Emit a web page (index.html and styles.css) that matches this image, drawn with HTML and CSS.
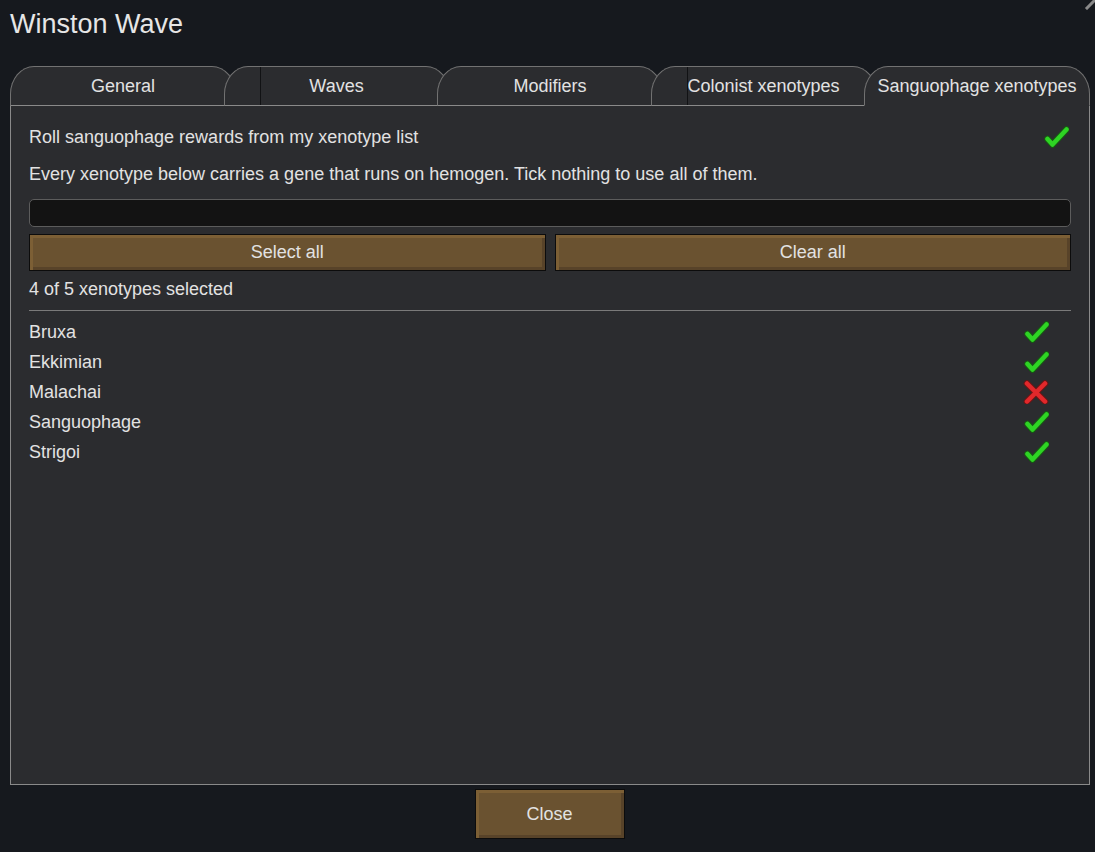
FILE: index.html
```html
<!DOCTYPE html>
<html>
<head>
<meta charset="utf-8">
<link rel="stylesheet" href="styles.css">
</head>
<body>
<div class="window">
  <h1 class="title">Winston Wave</h1>
  <div class="tabs">
    <div class="tab">General</div>
    <div class="tab"><span class="notch"></span>Waves</div>
    <div class="tab">Modifiers</div>
    <div class="tab"><span class="notch"></span>Colonist xenotypes</div>
    <div class="tab active">Sanguophage xenotypes</div>
  </div>
  <div class="panel">
    <div class="row toggle-row">
      <span>Roll sanguophage rewards from my xenotype list</span>
      <svg class="icon" viewBox="0 0 26 24" width="26" height="24"><path class="chk-o" d="M4.5 14 L9.5 19.5 L23.5 4.5"/><path class="chk" d="M4.5 14 L9.5 19.5 L23.5 4.5"/></svg>
    </div>
    <div class="row note">Every xenotype below carries a gene that runs on hemogen. Tick nothing to use all of them.</div>
    <div class="search"></div>
    <div class="btn-row">
      <div class="btn">Select all</div>
      <div class="btn">Clear all</div>
    </div>
    <div class="count">4 of 5 xenotypes selected</div>
    <div class="divider"></div>
    <ul class="list">
      <li class="item"><span>Bruxa</span><svg class="icon" viewBox="0 0 26 24" width="26" height="24"><path class="chk-o" d="M4.5 14 L9.5 19.5 L23.5 4.5"/><path class="chk" d="M4.5 14 L9.5 19.5 L23.5 4.5"/></svg></li>
      <li class="item"><span>Ekkimian</span><svg class="icon" viewBox="0 0 26 24" width="26" height="24"><path class="chk-o" d="M4.5 14 L9.5 19.5 L23.5 4.5"/><path class="chk" d="M4.5 14 L9.5 19.5 L23.5 4.5"/></svg></li>
      <li class="item"><span>Malachai</span><svg class="icon" viewBox="0 0 26 24" width="26" height="24"><path class="x-o" d="M4 3.5 L22 21.5 M22 3.5 L4 21.5"/><path class="x" d="M4 3.5 L22 21.5 M22 3.5 L4 21.5"/></svg></li>
      <li class="item"><span>Sanguophage</span><svg class="icon" viewBox="0 0 26 24" width="26" height="24"><path class="chk-o" d="M4.5 14 L9.5 19.5 L23.5 4.5"/><path class="chk" d="M4.5 14 L9.5 19.5 L23.5 4.5"/></svg></li>
      <li class="item"><span>Strigoi</span><svg class="icon" viewBox="0 0 26 24" width="26" height="24"><path class="chk-o" d="M4.5 14 L9.5 19.5 L23.5 4.5"/><path class="chk" d="M4.5 14 L9.5 19.5 L23.5 4.5"/></svg></li>
    </ul>
  </div>
  <div class="footer">
    <div class="btn close">Close</div>
  </div>
</div>
<svg class="resize" width="12" height="12" viewBox="0 0 12 12"><path d="M3 10 L11 2" stroke="#8a8a8a" stroke-width="3" stroke-linecap="square"/></svg>
</body>
</html>
```

FILE: styles.css
```css
html, body {
  margin: 0;
  padding: 0;
  background: #16191e;
  color: #e2e2e2;
  font-family: "Liberation Sans", Arial, sans-serif;
  font-size: 18px;
}
.window {
  padding: 0 5px 0 10px;
  width: 1080px;
}
.title {
  margin: 0;
  padding-top: 9px;
  height: 30px;
  line-height: 30px;
  font-size: 27px;
  font-weight: normal;
  color: #e6e6e6;
}
.tabs {
  display: flex;
  margin-top: 27px;
  height: 40px;
  margin-bottom: -1px;
}
.tab {
  position: relative;
  box-sizing: border-box;
  flex: 0 0 226px;
  height: 40px;
  margin-left: -12.5px;
  background: #2b2c2f;
  border: 1px solid #727272;
  border-bottom-color: #8a8a8a;
  border-radius: 24px 24px 0 0 / 28px 28px 0 0;
  text-align: center;
  line-height: 38px;
  white-space: nowrap;
  color: #e2e2e2;
}
.tab:first-child { margin-left: 0; }
.tab.active {
  border-bottom-color: #2b2c2f;
}
.notch {
  position: absolute;
  left: 35px;
  top: 0;
  bottom: 0;
  width: 1px;
  background: #111214;
}
.panel {
  box-sizing: border-box;
  height: 680px;
  background: #2b2c2f;
  border: 1px solid #8a8a8a;
  padding: 15px 18px 0 18px;
  display: flex;
  flex-direction: column;
}
.row {
  height: 32px;
  line-height: 32px;
}
.toggle-row {
  display: flex;
  justify-content: space-between;
  align-items: center;
  padding-right: 2px;
}
.note {
  margin-top: 5px;
}
.search {
  box-sizing: border-box;
  margin-top: 9px;
  height: 28px;
  background: #131313;
  border: 1px solid #5c5c5c;
  border-radius: 5px;
}
.btn-row {
  margin-top: 7px;
  display: grid;
  grid-template-columns: 1fr 1fr;
  gap: 9px;
}
.btn {
  box-sizing: border-box;
  height: 37px;
  line-height: 35px;
  text-align: center;
  background: #6a5230;
  border: 1px solid #0c0c0c;
  box-shadow: inset 3px 3px 0 #7c5f35, inset -3px -3px 0 #584329;
  color: #e2e2e2;
}
.count {
  margin-top: 6px;
  height: 24px;
  line-height: 24px;
}
.divider {
  margin-top: 9px;
  height: 1px;
  background: #7a7a7a;
}
.list {
  list-style: none;
  margin: 6px 0 0 0;
  padding: 0;
}
.item {
  height: 30px;
  display: flex;
  justify-content: space-between;
  align-items: center;
  padding-right: 22px;
}
.icon { display: block; }
.chk-o { fill: none; stroke: #175a12; stroke-width: 6.5; stroke-linecap: round; stroke-linejoin: round; }
.chk { fill: none; stroke: #2ed424; stroke-width: 4.5; stroke-linecap: round; stroke-linejoin: round; }
.x-o { fill: none; stroke: #6a1515; stroke-width: 6.5; stroke-linecap: round; }
.x { fill: none; stroke: #e2282b; stroke-width: 4.5; stroke-linecap: round; }
.footer {
  display: flex;
  justify-content: center;
  margin-top: 4px;
  padding-right: 1px;
}
.btn.close {
  width: 150px;
  height: 50px;
  line-height: 48px;
}
.resize {
  position: absolute;
  top: -2px;
  right: -1px;
}
```
